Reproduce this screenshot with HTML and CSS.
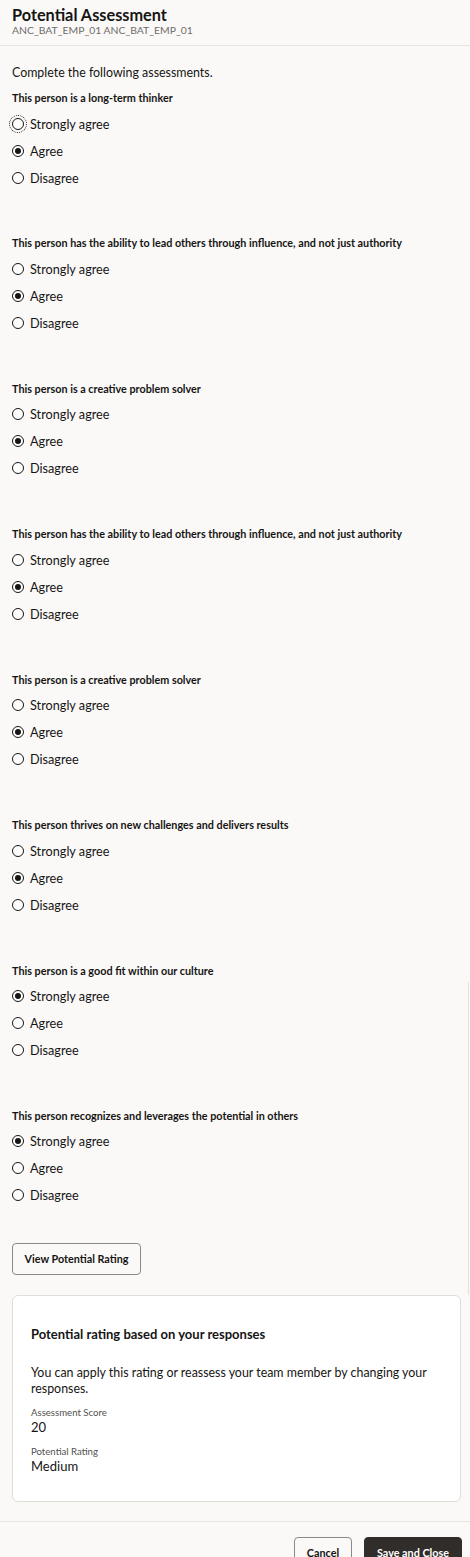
FILE: index.html
```html
<!DOCTYPE html>
<html lang="en">
<head>
<meta charset="utf-8">
<title>Potential Assessment</title>
<link rel="stylesheet" href="styles.css">
</head>
<body>
<div class="page">
  <header class="hdr">
    <h1 class="title">Potential Assessment</h1>
    <div class="sub">ANC_BAT_EMP_01 ANC_BAT_EMP_01</div>
  </header>
  <main class="content">
    <p class="intro">Complete the following assessments.</p>
    <div class="groups">
      <div class="q">
        <div class="qlabel">This person is a long-term thinker</div>
        <div class="opt"><span class="radio focus"></span><span>Strongly agree</span></div>
        <div class="opt"><span class="radio on"></span><span>Agree</span></div>
        <div class="opt"><span class="radio"></span><span>Disagree</span></div>
      </div>
      <div class="q">
        <div class="qlabel">This person has the ability to lead others through influence, and not just authority</div>
        <div class="opt"><span class="radio"></span><span>Strongly agree</span></div>
        <div class="opt"><span class="radio on"></span><span>Agree</span></div>
        <div class="opt"><span class="radio"></span><span>Disagree</span></div>
      </div>
      <div class="q">
        <div class="qlabel">This person is a creative problem solver</div>
        <div class="opt"><span class="radio"></span><span>Strongly agree</span></div>
        <div class="opt"><span class="radio on"></span><span>Agree</span></div>
        <div class="opt"><span class="radio"></span><span>Disagree</span></div>
      </div>
      <div class="q">
        <div class="qlabel">This person has the ability to lead others through influence, and not just authority</div>
        <div class="opt"><span class="radio"></span><span>Strongly agree</span></div>
        <div class="opt"><span class="radio on"></span><span>Agree</span></div>
        <div class="opt"><span class="radio"></span><span>Disagree</span></div>
      </div>
      <div class="q">
        <div class="qlabel">This person is a creative problem solver</div>
        <div class="opt"><span class="radio"></span><span>Strongly agree</span></div>
        <div class="opt"><span class="radio on"></span><span>Agree</span></div>
        <div class="opt"><span class="radio"></span><span>Disagree</span></div>
      </div>
      <div class="q">
        <div class="qlabel">This person thrives on new challenges and delivers results</div>
        <div class="opt"><span class="radio"></span><span>Strongly agree</span></div>
        <div class="opt"><span class="radio on"></span><span>Agree</span></div>
        <div class="opt"><span class="radio"></span><span>Disagree</span></div>
      </div>
      <div class="q">
        <div class="qlabel">This person is a good fit within our culture</div>
        <div class="opt"><span class="radio on"></span><span>Strongly agree</span></div>
        <div class="opt"><span class="radio"></span><span>Agree</span></div>
        <div class="opt"><span class="radio"></span><span>Disagree</span></div>
      </div>
      <div class="q">
        <div class="qlabel">This person recognizes and leverages the potential in others</div>
        <div class="opt"><span class="radio on"></span><span>Strongly agree</span></div>
        <div class="opt"><span class="radio"></span><span>Agree</span></div>
        <div class="opt"><span class="radio"></span><span>Disagree</span></div>
      </div>
    </div>
    <button class="btn btn-outline btn-view">View Potential Rating</button>
    <section class="card">
      <h2 class="card-title">Potential rating based on your responses</h2>
      <p class="card-body">You can apply this rating or reassess your team member by changing your responses.</p>
      <div class="field-label first">Assessment Score</div>
      <div class="field-value">20</div>
      <div class="field-label">Potential Rating</div>
      <div class="field-value">Medium</div>
    </section>
  </main>
  <footer class="ftr">
    <button class="btn btn-outline btn-cancel">Cancel</button>
    <button class="btn btn-primary">Save and Close</button>
  </footer>
  <div class="scrolltrack"></div>
</div>
</body>
</html>
```
FILE: styles.css
```css
html, body {
  margin: 0;
  padding: 0;
}
body {
  background: #faf9f8;
  color: #161513;
  font-family: Lato, "Liberation Sans", sans-serif;
}
.page {
  position: relative;
  height: 1557px;
  overflow: hidden;
  background: #faf9f8;
}
.hdr {
  padding: 6px 12px 9px 12px;
  border-bottom: 1px solid #e7e5e2;
}
.title {
  margin: 0;
  font-size: 16.3px;
  line-height: 18px;
  font-weight: 700;
}
.sub {
  font-size: 10.4px;
  line-height: 12px;
  color: #6f6c69;
}
.content {
  padding: 0 9px 19px 12px;
  border-bottom: 1px solid #e7e5e2;
  display: flex;
  flex-direction: column;
  align-items: flex-start;
}
.intro {
  margin: 19px 0 0 0;
  font-size: 12.4px;
  line-height: 16px;
}
.groups {
  margin-top: 9px;
  display: flex;
  flex-direction: column;
  gap: 44.43px;
}
.qlabel {
  font-size: 10.8px;
  line-height: 16px;
  font-weight: 700;
  margin-bottom: 4px;
}
.opt {
  display: flex;
  align-items: center;
  gap: 6px;
  height: 27px;
  font-size: 12.7px;
}
.radio {
  position: relative;
  box-sizing: border-box;
  width: 12px;
  height: 12px;
  border: 1.2px solid #161513;
  border-radius: 50%;
  background: #fff;
  flex: none;
}
.radio.on::after {
  content: "";
  position: absolute;
  left: 50%;
  top: 50%;
  width: 6px;
  height: 6px;
  margin: -3px 0 0 -3px;
  border-radius: 50%;
  background: #161513;
}
.radio.focus {
  outline: 1px dotted #161513;
  outline-offset: 2px;
}
.btn {
  font-family: inherit;
  font-weight: 700;
  font-size: 10.8px;
  height: 32px;
  border-radius: 4px;
  padding: 0 12px;
  cursor: pointer;
  color: #161513;
}
.btn-outline {
  background: #faf9f8;
  border: 1px solid #8c8985;
}
.btn-view {
  margin-top: 34px;
  width: 129px;
  padding: 0;
}
.card {
  margin-top: 20px;
  align-self: stretch;
  background: #fff;
  border: 1px solid #e0ddd9;
  border-radius: 6px;
  padding: 29px 18px 27px 18px;
}
.card-title {
  margin: 0;
  font-size: 13px;
  line-height: 18px;
  font-weight: 700;
}
.card-body {
  margin: 22px 0 0 0;
  font-size: 12.4px;
  line-height: 16px;
}
.field-label {
  margin-top: 11px;
  font-size: 9.6px;
  line-height: 12px;
  color: #54514e;
}
.field-label.first {
  margin-top: 10px;
}
.field-value {
  font-size: 13px;
  line-height: 16px;
}
.ftr {
  display: flex;
  justify-content: flex-end;
  gap: 12px;
  padding: 15px 8px 0 12px;
}
.btn-cancel {
  width: 58px;
  padding: 0;
}
.btn-primary {
  width: 98px;
  padding: 0;
  background: #312d2a;
  border: 1px solid #312d2a;
  color: #fff;
}
.scrolltrack {
  position: absolute;
  right: 1px;
  top: 982px;
  width: 1px;
  height: 313px;
  background: #e4e2df;
}
```
